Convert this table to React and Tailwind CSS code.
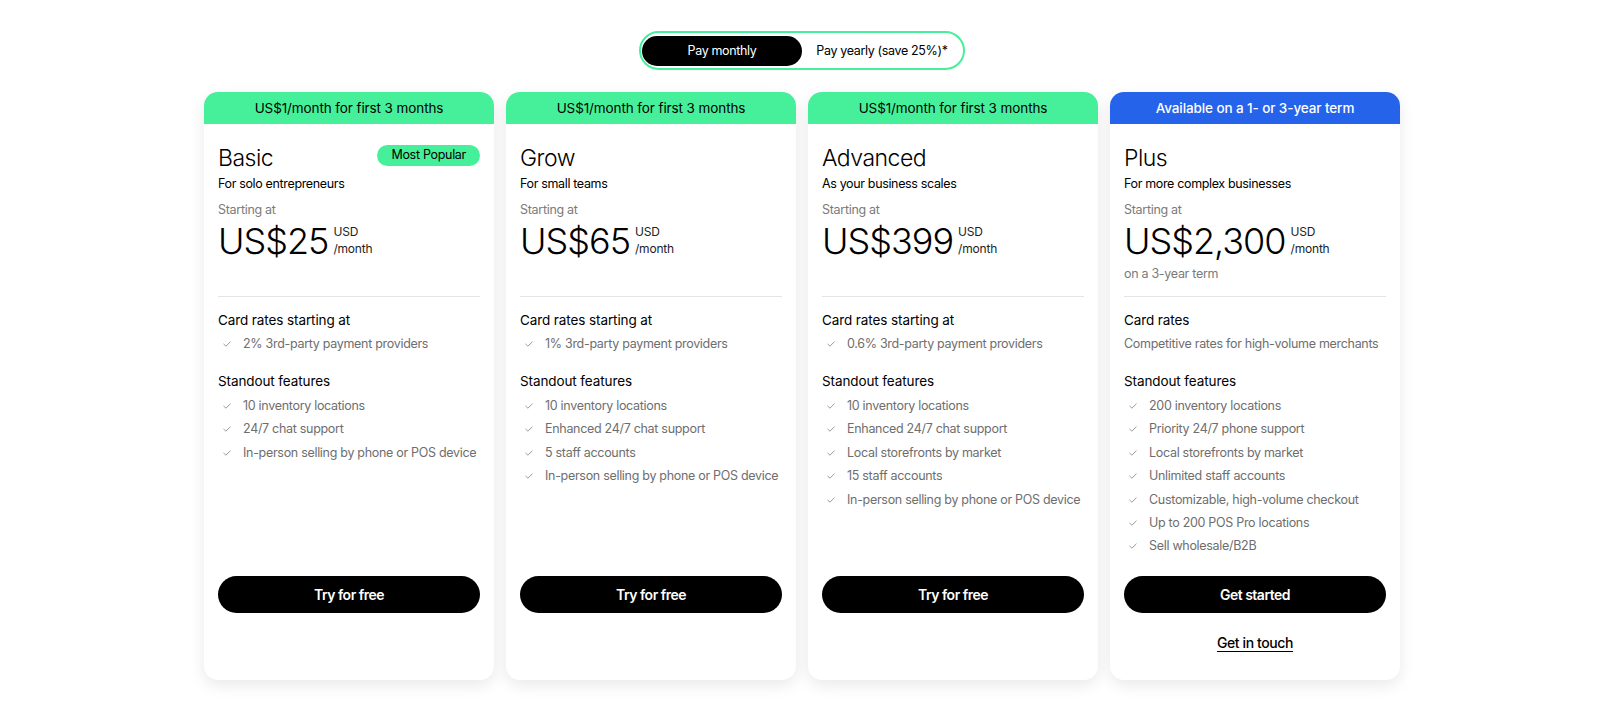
import { useState } from "react";

const plans = [
  {
    name: "Basic",
    banner: "US$1/month for first 3 months",
    badge: "Most Popular",
    tagline: "For solo entrepreneurs",
    price: "US$25",
    ratesTitle: "Card rates starting at",
    rate: "2% 3rd-party payment providers",
    features: [
      "10 inventory locations",
      "24/7 chat support",
      "In-person selling by phone or POS device",
    ],
    cta: "Try for free",
  },
  {
    name: "Grow",
    banner: "US$1/month for first 3 months",
    tagline: "For small teams",
    price: "US$65",
    ratesTitle: "Card rates starting at",
    rate: "1% 3rd-party payment providers",
    features: [
      "10 inventory locations",
      "Enhanced 24/7 chat support",
      "5 staff accounts",
      "In-person selling by phone or POS device",
    ],
    cta: "Try for free",
  },
  {
    name: "Advanced",
    banner: "US$1/month for first 3 months",
    tagline: "As your business scales",
    price: "US$399",
    ratesTitle: "Card rates starting at",
    rate: "0.6% 3rd-party payment providers",
    features: [
      "10 inventory locations",
      "Enhanced 24/7 chat support",
      "Local storefronts by market",
      "15 staff accounts",
      "In-person selling by phone or POS device",
    ],
    cta: "Try for free",
  },
  {
    name: "Plus",
    banner: "Available on a 1- or 3-year term",
    blue: true,
    tagline: "For more complex businesses",
    price: "US$2,300",
    note: "on a 3-year term",
    ratesTitle: "Card rates",
    ratePlain: "Competitive rates for high-volume merchants",
    features: [
      "200 inventory locations",
      "Priority 24/7 phone support",
      "Local storefronts by market",
      "Unlimited staff accounts",
      "Customizable, high-volume checkout",
      "Up to 200 POS Pro locations",
      "Sell wholesale/B2B",
    ],
    cta: "Get started",
    link: "Get in touch",
  },
];

function Check() {
  return (
    <svg width="8" height="6" viewBox="0 0 8 6" fill="none" className="shrink-0">
      <path d="M0.5 2.9 L2.9 5.2 L7.5 0.7" stroke="#9a9a9a" strokeWidth="1" />
    </svg>
  );
}

function Item({ children }) {
  return (
    <li className="flex items-center gap-[12px] whitespace-nowrap pl-[5px] text-[12.5px] leading-[20px] tracking-[-0.3px] text-[#6e6e6e]">
      <Check />
      <span>{children}</span>
    </li>
  );
}

function PlanCard({ plan }) {
  return (
    <div className="flex h-[588px] w-[290px] flex-col overflow-hidden rounded-[14px] bg-white shadow-[0_5px_16px_rgba(0,0,0,0.09)]">
      <div
        className={
          plan.blue
            ? "flex h-[32px] items-center justify-center bg-[#2563eb] text-[13.5px] font-medium tracking-[-0.1px] text-white"
            : "flex h-[32px] items-center justify-center bg-[#46f09a] text-[13.5px] tracking-[-0.1px] text-black"
        }
      >
        {plan.banner}
      </div>

      <div className="flex flex-1 flex-col px-[14px] pt-[18px]">
        <div className="flex items-start justify-between">
          <h3 className="text-[23px] font-light leading-[32px] tracking-[-0.5px] text-black">
            {plan.name}
          </h3>
          {plan.badge && (
            <span className="mt-[3px] flex h-[21px] items-center rounded-full bg-[#46f09a] px-[14px] text-[12.5px] tracking-[-0.3px] text-black">
              {plan.badge}
            </span>
          )}
        </div>
        <p className="text-[12.5px] leading-[20px] tracking-[-0.35px] text-black">{plan.tagline}</p>

        <div className="h-[102px] pt-[6px]">
          <p className="text-[12.5px] leading-[20px] tracking-[-0.3px] text-[#7a7a7a]">Starting at</p>
          <div className="mt-[1px] flex items-start">
            <span className="text-[36px] font-light leading-[40px] tracking-[-1px] text-black">
              {plan.price}
            </span>
            <div className="ml-[5px] mt-[3px] flex flex-col text-[12px] leading-[16px] tracking-[-0.2px] text-[#222]">
              <span>USD</span>
              <span className="mt-[1px]">/month</span>
            </div>
          </div>
          {plan.note && (
            <p className="mt-[3px] text-[12.5px] leading-[20px] tracking-[-0.3px] text-[#7a7a7a]">
              {plan.note}
            </p>
          )}
        </div>

        <div className="h-px bg-[#e4e4e7]" />

        <h4 className="mt-[13px] text-[13.5px] leading-[20px] tracking-[-0.1px] text-black">
          {plan.ratesTitle}
        </h4>
        {plan.rate ? (
          <ul className="mt-[4px]">
            <Item>{plan.rate}</Item>
          </ul>
        ) : (
          <p className="mt-[4px] whitespace-nowrap text-[12.5px] leading-[20px] tracking-[-0.3px] text-[#6e6e6e]">
            {plan.ratePlain}
          </p>
        )}

        <h4 className="mt-[17px] text-[13.5px] leading-[20px] tracking-[-0.1px] text-black">
          Standout features
        </h4>
        <ul className="mt-[5px] flex flex-col gap-[3.4px]">
          {plan.features.map((f) => (
            <Item key={f}>{f}</Item>
          ))}
        </ul>

        <div className="mt-auto">
          <button className="flex h-[37px] w-full items-center justify-center rounded-full bg-black text-[14px] font-semibold tracking-[-0.5px] text-white">
            {plan.cta}
          </button>
          <div className="flex h-[67px] justify-center pt-[20px]">
            {plan.link && (
              <a className="text-[14px] font-medium leading-[20px] tracking-[-0.4px] text-black underline underline-offset-[3px]">
                {plan.link}
              </a>
            )}
          </div>
        </div>
      </div>
    </div>
  );
}

export default function App() {
  const [yearly, setYearly] = useState(false);

  return (
    <div className="min-h-[702px] bg-white pl-[4px] pt-[31px] font-['Inter',sans-serif]">
      <div className="flex justify-center">
        <div className="flex rounded-full border-2 border-[#46f09a] pb-[2px] pl-[1px] pr-[1px] pt-[3px]">
          <button
            onClick={() => setYearly(false)}
            className={
              yearly
                ? "h-[30px] w-[160px] rounded-full text-[12.5px] tracking-[-0.35px] text-black"
                : "h-[30px] w-[160px] rounded-full bg-black text-[12.5px] tracking-[-0.35px] text-white"
            }
          >
            Pay monthly
          </button>
          <button
            onClick={() => setYearly(true)}
            className={
              yearly
                ? "h-[30px] w-[160px] rounded-full bg-black text-[12.5px] tracking-[-0.35px] text-white"
                : "h-[30px] w-[160px] rounded-full text-[12.5px] tracking-[-0.35px] text-black"
            }
          >
            Pay yearly (save 25%)*
          </button>
        </div>
      </div>

      <div className="mt-[22px] flex justify-center gap-[12px]">
        {plans.map((p) => (
          <PlanCard key={p.name} plan={p} />
        ))}
      </div>
    </div>
  );
}
